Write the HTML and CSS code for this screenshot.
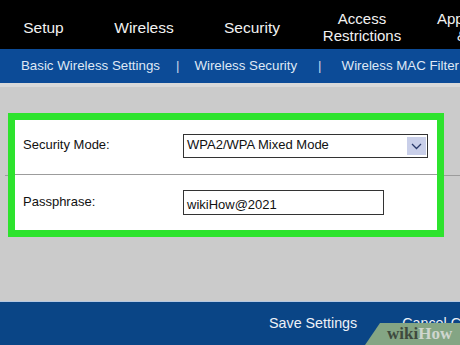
FILE: index.html
```html
<!DOCTYPE html>
<html>
<head>
<meta charset="utf-8">
<link rel="stylesheet" href="styles.css">
</head>
<body>
<div class="page">
  <nav class="topnav">
    <div class="tab">Setup</div>
    <div class="tab">Wireless</div>
    <div class="tab">Security</div>
    <div class="tab two">Access<br>Restrictions</div>
    <div class="tab two last"><span class="l1">Applications</span><span class="l2">&amp; Gaming</span></div>
  </nav>
  <nav class="subnav">
    <span class="sub">Basic Wireless Settings</span>
    <span class="bar">|</span>
    <span class="sub">Wireless Security</span>
    <span class="bar wide">|</span>
    <span class="sub">Wireless MAC Filter</span>
  </nav>
  <div class="band"></div>
  <main class="content">
    <section class="highlight">
      <div class="row first">
        <div class="label">Security Mode:</div>
        <div class="select">
          <span class="select-text">WPA2/WPA Mixed Mode</span>
          <span class="arrow">
            <svg width="11" height="7" viewBox="0 0 11 7"><path d="M1 1 L5.5 5.5 L10 1" fill="none" stroke="#2a3a6a" stroke-width="1.3"/></svg>
          </span>
        </div>
      </div>
      <div class="row second">
        <div class="label">Passphrase:</div>
        <div class="input">wikiHow@2021</div>
      </div>
    </section>
  </main>
  <footer class="footer">
    <span class="btn">Save Settings</span>
    <span class="btn">Cancel Changes</span>
    <div class="wm"><span class="wm-a">wiki</span><span class="wm-b">How</span></div>
  </footer>
</div>
</body>
</html>
```
FILE: styles.css
```css
html, body {
  margin: 0;
  padding: 0;
}
body {
  width: 460px;
  height: 345px;
  overflow: hidden;
  font-family: "Liberation Sans", Arial, sans-serif;
  background: #cbcbcb;
}
.page {
  width: 460px;
  height: 345px;
  display: flex;
  flex-direction: column;
  overflow: hidden;
  position: relative;
}
.topnav {
  height: 49px;
  background: #000;
  display: grid;
  grid-template-columns: 87px 114px 102px 118px 113px;
  align-items: center;
  color: #f2f2f2;
  font-size: 15.5px;
  white-space: nowrap;
  box-sizing: border-box;
  padding-top: 5px;
}
.tab {
  text-align: center;
  line-height: 17px;
}
.tab.two {
  font-size: 15px;
}
.tab.last {
  text-align: left;
  padding-left: 16px;
}
.l1, .l2 {
  display: block;
}
.l2 {
  padding-left: 20px;
}
.subnav {
  height: 34px;
  background: #0c4b97;
  display: flex;
  align-items: center;
  padding-left: 21px;
  color: #dfe8f5;
  font-size: 13.3px;
  white-space: nowrap;
  padding-bottom: 1px;
  box-sizing: border-box;
}
.bar {
  padding: 0 15px 0 16px;
  color: #c9d6ea;
}
.bar.wide {
  padding: 0 20px 0 21px;
}
.band {
  height: 4px;
  background: #d9d9d9;
}
.content {
  height: 214px;
  background: #cbcbcb;
  padding-top: 26px;
  box-sizing: border-box;
}
.highlight {
  position: relative;
  margin-left: 8px;
  width: 436px;
  height: 124px;
  box-sizing: border-box;
  border: 7px solid #2de32d;
  background: #fff;
  display: flex;
  flex-direction: column;
}
.highlight::before,
.highlight::after {
  content: "";
  position: absolute;
  top: 55px;
  height: 1px;
  background: #9c9c9c;
}
.highlight::before {
  left: -10px;
  width: 3px;
}
.highlight::after {
  right: -23px;
  width: 16px;
}
.row {
  display: flex;
  align-items: flex-start;
  font-size: 13px;
  color: #111;
}
.row.first {
  height: 55px;
  padding-top: 14px;
  box-sizing: border-box;
  border-bottom: 1px solid #9c9c9c;
}
.row.second {
  height: 54px;
  padding-top: 15px;
  box-sizing: border-box;
}
.label {
  width: 160px;
  padding-left: 8px;
  line-height: 22px;
}
.second .label {
  line-height: 24px;
}
.select {
  width: 245px;
  height: 24px;
  box-sizing: border-box;
  border: 1px solid #333;
  display: flex;
  align-items: center;
  justify-content: space-between;
  padding-left: 3px;
  padding-right: 1px;
}
.select-text {
  line-height: 18px;
  margin-top: -3px;
}
.arrow {
  width: 19px;
  height: 18px;
  background: #c9cfe9;
  display: flex;
  align-items: center;
  justify-content: center;
}
.input {
  width: 201px;
  height: 25px;
  box-sizing: border-box;
  border: 1px solid #333;
  padding-left: 3px;
  padding-top: 5px;
  line-height: 17px;
}
.footer {
  flex: 1;
  background: #0a4586;
  border-top: 1px solid #b5c8e2;
  display: flex;
  align-items: center;
  padding-left: 269px;
  gap: 45px;
  white-space: nowrap;
  color: #eef2f8;
  font-size: 14.3px;
  position: relative;
}
.btn {
  margin-top: -2px;
}
.wm {
  position: absolute;
  right: 0;
  bottom: 0;
  width: 95px;
  height: 22px;
  background: #84a584;
  clip-path: polygon(15px 0, 100% 0, 100% 100%, 0 100%);
  font-family: "Liberation Serif", serif;
  font-weight: bold;
  font-size: 17px;
  line-height: 22px;
  padding-left: 22px;
  box-sizing: border-box;
}
.wm-a {
  color: #3e4a3e;
}
.wm-b {
  color: #cfd6cf;
}
```
